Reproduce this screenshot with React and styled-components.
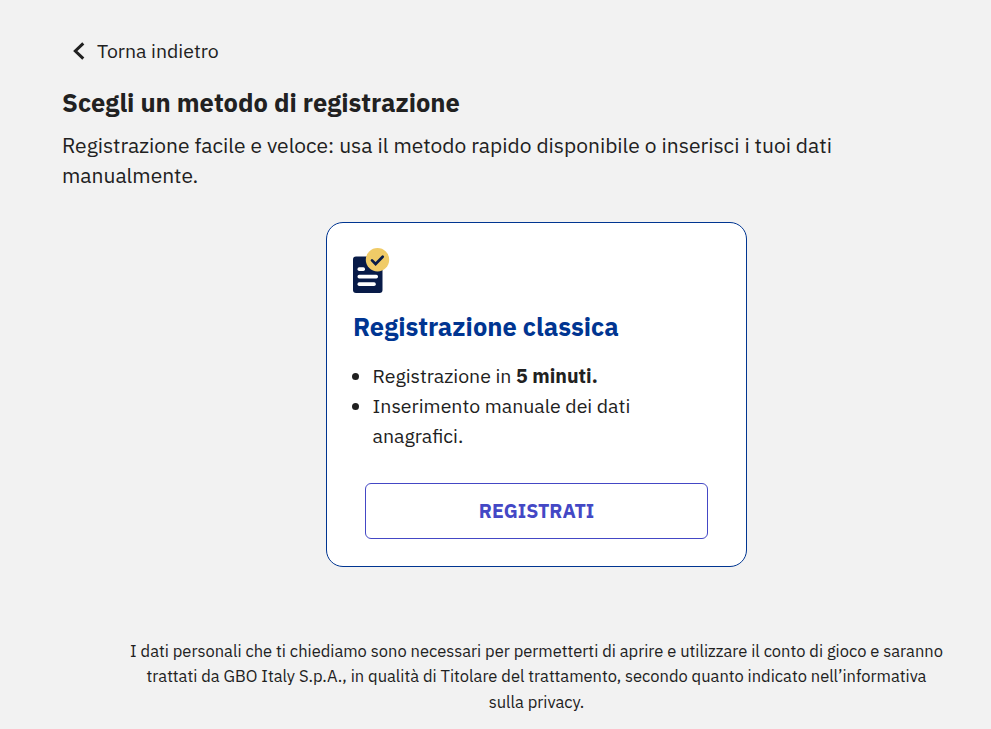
import React from 'react'
import styled, { createGlobalStyle } from 'styled-components'

const GlobalStyle = createGlobalStyle`
  * {
    margin: 0;
    padding: 0;
    box-sizing: border-box;
  }

  body {
    background-color: #f2f2f2;
    color: #212121;
    font-family: 'IBM Plex Sans', Roboto, sans-serif;
    overflow: hidden;
  }
`

const Page = styled.main`
  height: 729px;
  padding-top: 36px;
  overflow: hidden;
`

const Header = styled.header`
  padding-left: 62px;
`

const BackButton = styled.button`
  display: flex;
  align-items: center;
  gap: 12px;
  height: 30px;
  padding-left: 11px;
  border: none;
  background: none;
  color: inherit;
  font-family: inherit;
  font-size: 19.5px;
  line-height: 30px;
  cursor: pointer;
`

const Title = styled.h1`
  margin-top: 18px;
  font-size: 25.5px;
  font-weight: 700;
  line-height: 38px;
`

const Subtitle = styled.p`
  width: 800px;
  margin-top: 8px;
  font-size: 21px;
  line-height: 30px;
`

const Methods = styled.section`
  display: flex;
  justify-content: center;
  padding-left: 82px;
  margin-top: 32px;
`

const Card = styled.article`
  width: 421px;
  height: 345px;
  padding: 25px 26px;
  border: 1px solid #003591;
  border-radius: 17px;
  background-color: #fff;
`

const CardIcon = styled.svg`
  display: block;
  width: 37px;
  height: 46px;
`

const CardTitle = styled.h2`
  margin-top: 14px;
  color: #003591;
  font-size: 25.5px;
  font-weight: 700;
  line-height: 38px;
`

const List = styled.ul`
  margin-top: 15px;
  list-style: none;
`

const Item = styled.li`
  display: flex;
  font-size: 19.5px;
  line-height: 30px;

  &::before {
    content: '';
    flex: none;
    width: 7px;
    height: 7px;
    margin: 12px 13.5px 0 -1px;
    border-radius: 50%;
    background-color: #212121;
  }
`

const RegisterButton = styled.button`
  display: block;
  width: 343px;
  height: 56px;
  margin: 32px 0 0 12px;
  padding-bottom: 2px;
  border: 1px solid #4448c5;
  border-radius: 6px;
  background-color: #fff;
  color: #4448c5;
  font-family: inherit;
  font-size: 19.5px;
  font-weight: 700;
  cursor: pointer;
`

const Privacy = styled.p`
  margin-top: 71.5px;
  padding-left: 82px;
  font-size: 16.5px;
  line-height: 25.5px;
  text-align: center;
`

const Line = styled.span`
  display: block;
  white-space: nowrap;
`

export default function App() {
  return (
    <Page>
      <GlobalStyle />
      <Header>
        <BackButton>
          <svg width="12" height="18" viewBox="0 0 12 18" fill="none">
            <path d="M10.3 1.3L2.3 9L10.3 16.7" stroke="#212121" strokeWidth="3" />
          </svg>
          <span>Torna indietro</span>
        </BackButton>
        <Title>Scegli un metodo di registrazione</Title>
        <Subtitle>
          <Line>Registrazione facile e veloce: usa il metodo rapido disponibile o inserisci i tuoi dati</Line>
          <Line>manualmente.</Line>
        </Subtitle>
      </Header>
      <Methods>
        <Card>
          <CardIcon viewBox="0 0 37 46">
            <rect x="0" y="8.5" width="29.5" height="36.5" rx="3" fill="#081b48" />
            <g fill="#fff">
              <rect x="4.5" y="19.2" width="7.5" height="3.8" rx="1.7" />
              <rect x="4.5" y="26.7" width="20.5" height="3.8" rx="1.7" />
              <rect x="4.5" y="34.2" width="18.3" height="3.8" rx="1.7" />
            </g>
            <circle cx="24.5" cy="11.8" r="11.7" fill="#f0cb67" />
            <path d="M19 12.4L22.6 16L29.7 8.8" fill="none" stroke="#081b48" strokeWidth="2.7" strokeLinecap="round" />
          </CardIcon>
          <CardTitle>Registrazione classica</CardTitle>
          <List>
            <Item>
              <p>Registrazione in <b>5 minuti.</b></p>
            </Item>
            <Item>
              <p>Inserimento manuale dei dati<br />anagrafici.</p>
            </Item>
          </List>
          <RegisterButton>REGISTRATI</RegisterButton>
        </Card>
      </Methods>
      <Privacy>
        <Line>I dati personali che ti chiediamo sono necessari per permetterti di aprire e utilizzare il conto di gioco e saranno</Line>
        <Line>trattati da GBO Italy S.p.A., in qualità di Titolare del trattamento, secondo quanto indicato nell’informativa</Line>
        <Line>sulla privacy.</Line>
      </Privacy>
    </Page>
  )
}
